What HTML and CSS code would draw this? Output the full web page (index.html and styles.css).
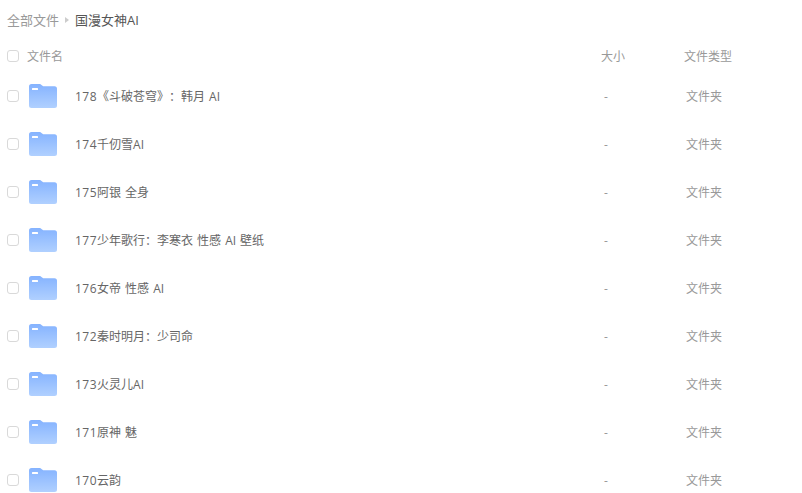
FILE: index.html
```html
<!DOCTYPE html>
<html lang="zh-CN">

<head>
    <meta charset="UTF-8">
    <title>国漫女神AI</title>
    <link rel="stylesheet" href="styles.css">
</head>

<body>
    <nav class="crumbs">
        <span class="crumb-root">全部文件</span>
        <span class="crumb-arrow"></span>
        <span class="crumb-current">国漫女神AI</span>
    </nav>

    <div class="file-head">
        <span class="check"></span>
        <span class="head-name">文件名</span>
        <span class="col-size">大小</span>
        <span class="col-type">文件类型</span>
    </div>

    <ul class="file-list">
        <li class="file-row">
            <span class="check"></span>
            <svg class="folder" viewBox="0 0 28 24"><use href="#folder-icon"></use></svg>
            <span class="file-name"><span class="num">178</span>《斗破苍穹》：韩月 AI</span>
            <span class="col-size">-</span>
            <span class="col-type">文件夹</span>
        </li>
        <li class="file-row">
            <span class="check"></span>
            <svg class="folder" viewBox="0 0 28 24"><use href="#folder-icon"></use></svg>
            <span class="file-name"><span class="num">174</span>千仞雪AI</span>
            <span class="col-size">-</span>
            <span class="col-type">文件夹</span>
        </li>
        <li class="file-row">
            <span class="check"></span>
            <svg class="folder" viewBox="0 0 28 24"><use href="#folder-icon"></use></svg>
            <span class="file-name"><span class="num">175</span>阿银 全身</span>
            <span class="col-size">-</span>
            <span class="col-type">文件夹</span>
        </li>
        <li class="file-row">
            <span class="check"></span>
            <svg class="folder" viewBox="0 0 28 24"><use href="#folder-icon"></use></svg>
            <span class="file-name"><span class="num">177</span>少年歌行：李寒衣 性感 AI 壁纸</span>
            <span class="col-size">-</span>
            <span class="col-type">文件夹</span>
        </li>
        <li class="file-row">
            <span class="check"></span>
            <svg class="folder" viewBox="0 0 28 24"><use href="#folder-icon"></use></svg>
            <span class="file-name"><span class="num">176</span>女帝 性感 AI</span>
            <span class="col-size">-</span>
            <span class="col-type">文件夹</span>
        </li>
        <li class="file-row">
            <span class="check"></span>
            <svg class="folder" viewBox="0 0 28 24"><use href="#folder-icon"></use></svg>
            <span class="file-name"><span class="num">172</span>秦时明月：少司命</span>
            <span class="col-size">-</span>
            <span class="col-type">文件夹</span>
        </li>
        <li class="file-row">
            <span class="check"></span>
            <svg class="folder" viewBox="0 0 28 24"><use href="#folder-icon"></use></svg>
            <span class="file-name"><span class="num">173</span>火灵儿AI</span>
            <span class="col-size">-</span>
            <span class="col-type">文件夹</span>
        </li>
        <li class="file-row">
            <span class="check"></span>
            <svg class="folder" viewBox="0 0 28 24"><use href="#folder-icon"></use></svg>
            <span class="file-name"><span class="num">171</span>原神 魅</span>
            <span class="col-size">-</span>
            <span class="col-type">文件夹</span>
        </li>
        <li class="file-row">
            <span class="check"></span>
            <svg class="folder" viewBox="0 0 28 24"><use href="#folder-icon"></use></svg>
            <span class="file-name"><span class="num">170</span>云韵</span>
            <span class="col-size">-</span>
            <span class="col-type">文件夹</span>
        </li>
    </ul>

    <svg class="icon-defs" width="0" height="0">
        <defs>
            <linearGradient id="folder-fill" x1="0" y1="0" x2="0" y2="1">
                <stop offset="0" stop-color="#85b3ff"></stop>
                <stop offset="1" stop-color="#b0d0ff"></stop>
            </linearGradient>
            <symbol id="folder-icon" viewBox="0 0 28 24">
                <path d="M2.500 0H10c1.200 0 2 .5 2.800 1.200L14.200 2.200H25.500A2.500 2.500 0 0 1 28 4.700V21.500A2.500 2.500 0 0 1 25.500 24H2.500A2.500 2.500 0 0 1 0 21.500V2.500A2.500 2.500 0 0 1 2.500 0Z" fill="url(#folder-fill)"></path>
                <rect x="3" y="4" width="6" height="2" rx="0.500" fill="#fff"></rect>
            </symbol>
        </defs>
    </svg>
</body>

</html>
```

FILE: styles.css
```css
body {
    margin: 0;
    padding: 0;
    height: 493px;
    overflow: hidden;
    background-color: #fff;
    color: #666;
    font-family: "Open Sans", "Noto Sans CJK SC", sans-serif;
    font-size: 12px;
}

.crumbs {
    display: flex;
    align-items: center;
    height: 38px;
    margin-bottom: 2px;
    padding-left: 7px;
    font-size: 13px;
}

.crumb-root {
    color: #999;
}

.crumb-arrow {
    width: 0;
    height: 0;
    margin: 2px 6px 0;
    border-left: 4px solid #ccc;
    border-top: 3px solid transparent;
    border-bottom: 3px solid transparent;
}

.crumb-current {
    color: #555;
}

.file-head,
.file-row {
    display: flex;
    align-items: center;
    padding-left: 7px;
}

.file-head {
    height: 32px;
    color: #999;
}

.head-name {
    width: 574px;
    margin-left: 8px;
}

.file-list {
    margin: 0;
    padding: 0;
    list-style: none;
}

.file-row {
    height: 48px;
}

.check {
    flex: none;
    box-sizing: border-box;
    width: 12px;
    height: 12px;
    border: 1px solid #d9d9d9;
    border-radius: 3px;
}

.folder {
    flex: none;
    width: 28px;
    height: 24px;
    margin-left: 10px;
}

.file-name {
    width: 526px;
    margin-left: 18px;
    word-spacing: 0.9px;
    text-spacing-trim: space-all;
}

.num {
    letter-spacing: 0.5px;
}

.col-size {
    width: 83px;
    color: #999;
}

.file-row .col-size {
    width: 82px;
    padding-left: 3px;
}

.col-type {
    color: #999;
}

.icon-defs {
    position: absolute;
}
```
